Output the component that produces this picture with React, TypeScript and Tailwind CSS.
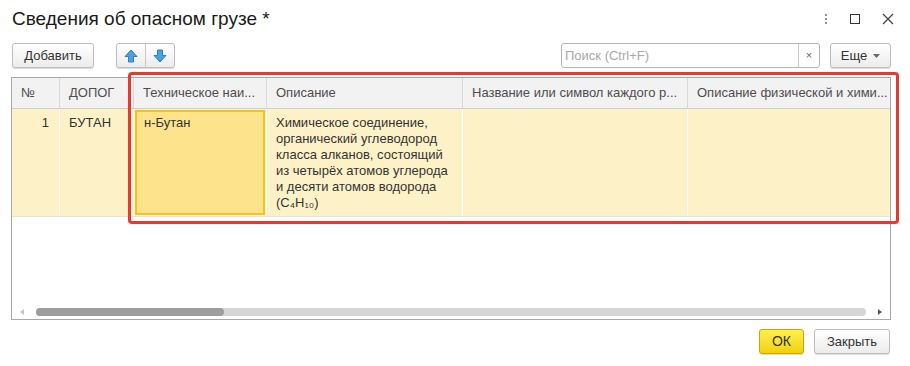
import React from "react";

const columns = [
    { title: "№", w: "w-[48px]" },
    { title: "ДОПОГ", w: "w-[74px]" },
    { title: "Техническое наи...", w: "w-[133px]" },
    { title: "Описание", w: "w-[196px]" },
    { title: "Название или символ каждого р...", w: "w-[225px]" },
    { title: "Описание физической и хими...", w: "w-[202px]" },
];

function ArrowIcon({ down = false }: { down?: boolean }) {
    return (
        <svg width="14" height="14" viewBox="0 0 14 14" className={down ? "rotate-180" : ""}>
            <path d="M7 1 L13 7.5 L9.5 7.5 L9.5 13 L4.5 13 L4.5 7.5 L1 7.5 Z" fill="#4aa3df" stroke="#2f7fc0" strokeWidth="1" strokeLinejoin="round" />
        </svg>
    );
}

export default function App() {
    return (
        <div className="relative w-[910px] h-[366px] bg-white overflow-hidden font-['Liberation_Sans',Arial,sans-serif] text-[#333]">
            {/* Title bar */}
            <div className="flex items-center justify-between h-[31px] pl-[12px] pr-[16px] pt-[7px]">
                <h1 className="text-[19px] leading-[24px] text-[#1a1a1a]">Сведения об опасном грузе *</h1>
                <div className="flex items-center gap-[22px] text-[#444]">
                    <svg width="4" height="12" viewBox="0 0 4 12">
                        <circle cx="2" cy="2" r="1.1" fill="#777" />
                        <circle cx="2" cy="6" r="1.1" fill="#777" />
                        <circle cx="2" cy="10" r="1.1" fill="#777" />
                    </svg>
                    <div className="w-[10px] h-[10px] border-[1.5px] border-[#333]" />
                    <svg width="12" height="12" viewBox="0 0 12 12">
                        <path d="M1 1 L11 11 M11 1 L1 11" stroke="#444" strokeWidth="1.3" />
                    </svg>
                </div>
            </div>

            {/* Toolbar */}
            <div className="flex items-center h-[25px] mt-[12px] pl-[12px] pr-[19px]">
                <button className="h-[25px] w-[82px] rounded-[3px] border border-[#bdbdbd] bg-gradient-to-b from-white to-[#ececec] shadow-[0_1px_1px_rgba(0,0,0,0.15)] text-[13px] text-[#333]">
                    Добавить
                </button>
                <div className="flex h-[25px] ml-[22px] rounded-[3px] border border-[#bdbdbd] bg-gradient-to-b from-white to-[#ececec] shadow-[0_1px_1px_rgba(0,0,0,0.15)]">
                    <div className="w-[29px] flex items-center justify-center border-r border-[#c8c8c8]">
                        <ArrowIcon />
                    </div>
                    <div className="w-[28px] flex items-center justify-center">
                        <ArrowIcon down />
                    </div>
                </div>
                <div className="flex-1" />
                <div className="flex h-[25px] w-[259px] rounded-[3px] border border-[#b5b5b5] bg-white">
                    <div className="flex-1 flex items-center pl-[3px] text-[13px] text-[#a8a8a8]">Поиск (Ctrl+F)</div>
                    <div className="w-[21px] flex items-center justify-center border-l border-[#c8c8c8] text-[11px] text-[#666]">×</div>
                </div>
                <button className="ml-[10px] h-[25px] w-[61px] flex items-center justify-center gap-[6px] rounded-[3px] border border-[#bdbdbd] bg-gradient-to-b from-white to-[#ececec] shadow-[0_1px_1px_rgba(0,0,0,0.15)] text-[13px] text-[#333]">
                    Еще
                    <svg width="7" height="4" viewBox="0 0 7 4">
                        <path d="M0 0 L7 0 L3.5 4 Z" fill="#666" />
                    </svg>
                </button>
            </div>

            {/* Table */}
            <div className="ml-[11px] mt-[9px] w-[880px] h-[243px] border border-[#a9a9a9] flex flex-col">
                <div className="flex h-[31px] bg-[#f2f2f2] border-b border-[#cfcfcf]">
                    {columns.map((c, i) => (
                        <div
                            key={i}
                            className={`${c.w} shrink-0 flex items-center px-[9px] text-[13px] text-[#4d4d4d] whitespace-nowrap overflow-hidden ${i < columns.length - 1 ? "border-r border-[#d9d9d9]" : ""}`}
                        >
                            {c.title}
                        </div>
                    ))}
                </div>
                <div className="flex h-[108px] bg-[#fdf2c7] border-b border-[#e3e3e3] text-[13px] leading-[16px] text-[#333]">
                    <div className="w-[48px] shrink-0 border-r border-white pt-[6px] pr-[10px] text-right">1</div>
                    <div className="w-[74px] shrink-0 border-r border-white pt-[6px] pl-[9px]">БУТАН</div>
                    <div className="w-[133px] shrink-0 border-r border-white p-[1px]">
                        <div className="h-full border-[2px] border-[#f5c31a] bg-[#fde48c] pt-[3px] pl-[7px]">н-Бутан</div>
                    </div>
                    <div className="w-[196px] shrink-0 border-r border-white pt-[6px] pl-[9px] pr-[6px]">
                        Химическое соединение, органический углеводород класса алканов, состоящий из четырёх атомов углерода и десяти атомов водорода (C₄H₁₀)
                    </div>
                    <div className="w-[225px] shrink-0 border-r border-white" />
                    <div className="w-[202px] shrink-0" />
                </div>
                <div className="flex-1" />
                {/* Horizontal scrollbar */}
                <div className="flex items-center h-[8px] mb-[3px] pl-[8px] pr-[8px] gap-[6px]">
                    <svg width="4" height="6" viewBox="0 0 4 6">
                        <path d="M4 0 L0 3 L4 6 Z" fill="#c4c4c4" />
                    </svg>
                    <div className="flex-1 h-[8px] rounded-full bg-[#d6d6d6] mx-[6px] flex">
                        <div className="w-[188px] h-full rounded-full bg-[#9d9d9d]" />
                    </div>
                    <svg width="4" height="6" viewBox="0 0 4 6">
                        <path d="M0 0 L4 3 L0 6 Z" fill="#555" />
                    </svg>
                </div>
            </div>

            {/* Footer */}
            <div className="flex justify-end gap-[10px] mt-[9px] pr-[20px]">
                <button className="h-[25px] w-[45px] rounded-[3px] border border-[#c9a800] bg-gradient-to-b from-[#fff04a] to-[#f2d200] shadow-[0_1px_1px_rgba(0,0,0,0.15)] text-[14px] text-[#333]">
                    ОК
                </button>
                <button className="h-[25px] w-[76px] rounded-[3px] border border-[#bdbdbd] bg-gradient-to-b from-white to-[#ececec] shadow-[0_1px_1px_rgba(0,0,0,0.15)] text-[13px] text-[#333]">
                    Закрыть
                </button>
            </div>

            {/* Highlight annotation */}
            <div className="absolute left-[128px] top-[72px] w-[771px] h-[152px] border-[3px] border-[#e53a32] rounded-[4px] pointer-events-none" />
        </div>
    );
}
